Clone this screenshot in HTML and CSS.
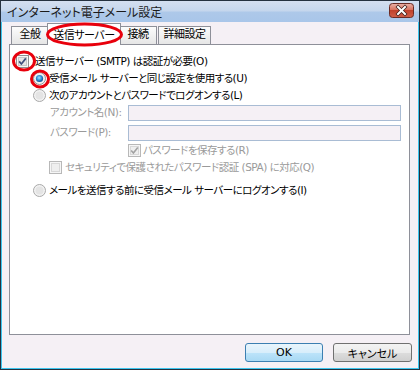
FILE: index.html
```html
<!DOCTYPE html>
<html lang="ja">
<head>
<meta charset="utf-8">
<title>インターネット電子メール設定</title>
<link rel="stylesheet" href="styles.css">
</head>
<body>
<div class="window">
  <div class="titlebar">
    <span class="title">インターネット電子メール設定</span>
    <span class="close">
      <svg width="25" height="15" viewBox="0 0 25 15">
        <defs>
          <linearGradient id="cg" x1="0" y1="0" x2="0" y2="1">
            <stop offset="0" stop-color="#eab2a8"/>
            <stop offset="0.45" stop-color="#d9735f"/>
            <stop offset="0.5" stop-color="#c1412c"/>
            <stop offset="1" stop-color="#d0604a"/>
          </linearGradient>
        </defs>
        <rect x="0.5" y="0.5" width="24" height="14" rx="3" fill="url(#cg)" stroke="#6b2b24"/>
        <path d="M9 4 L16 11 M16 4 L9 11" stroke="#3a1a16" stroke-width="3.4" stroke-linecap="square"/>
        <path d="M9 4 L16 11 M16 4 L9 11" stroke="#ffffff" stroke-width="2" stroke-linecap="square"/>
      </svg>
    </span>
  </div>
  <div class="body">
    <div class="tabs">
      <span class="tab t1">全般</span>
      <span class="tab active t2">送信サーバー</span>
      <span class="tab t3">接続</span>
      <span class="tab t4">詳細設定</span>
    </div>
    <div class="panel">
      <div class="row r1">
        <svg class="box" width="13" height="13" viewBox="0 0 13 13">
          <rect x="0.5" y="0.5" width="12" height="12" fill="#f6f6f6" stroke="#8e8f8f"/>
          <rect x="2.5" y="2.5" width="8" height="8" fill="#e6e6e6" stroke="#c6c6c6"/>
          <path d="M3.2 6.4 L5.4 9 L9.8 3.4" fill="none" stroke="#3f4f7c" stroke-width="1.7"/>
        </svg>
        <span class="lbl l1">送信サーバー (SMTP) は認証が必要(O)</span>
      </div>
      <div class="row r2">
        <svg class="box" width="13" height="13" viewBox="0 0 13 13">
          <defs>
            <radialGradient id="rg" cx="0.45" cy="0.4" r="0.6">
              <stop offset="0" stop-color="#9fe2ff"/>
              <stop offset="0.6" stop-color="#2a8ad4"/>
              <stop offset="1" stop-color="#10488a"/>
            </radialGradient>
          </defs>
          <circle cx="6.5" cy="6.5" r="6" fill="#f0f0f0" stroke="#8e8f8f"/>
          <circle cx="6.5" cy="6.5" r="3.6" fill="url(#rg)"/>
        </svg>
        <span class="lbl">受信メール サーバーと同じ設定を使用する(U)</span>
      </div>
      <div class="row r3">
        <svg class="box" width="13" height="13" viewBox="0 0 13 13">
          <circle cx="6.5" cy="6.5" r="6" fill="#f2f2f2" stroke="#a8a8a8"/>
          <circle cx="6.5" cy="6.5" r="4" fill="#e4e4e4"/>
        </svg>
        <span class="lbl">次のアカウントとパスワードでログオンする(L)</span>
      </div>
      <div class="row r4">
        <span class="lbl dis field">アカウント名(N):</span>
        <span class="input"></span>
      </div>
      <div class="row r5">
        <span class="lbl dis field">パスワード(P):</span>
        <span class="input"></span>
      </div>
      <div class="row r6">
        <svg class="box" width="13" height="13" viewBox="0 0 13 13">
          <rect x="0.5" y="0.5" width="12" height="12" fill="#f6f6f6" stroke="#b8b8b8"/>
          <rect x="2.5" y="2.5" width="8" height="8" fill="#efefef" stroke="#d8d8d8"/>
          <path d="M3.2 6.4 L5.4 9 L9.8 3.4" fill="none" stroke="#a2a2a2" stroke-width="1.6"/>
        </svg>
        <span class="lbl dis">パスワードを保存する(R)</span>
      </div>
      <div class="row r7">
        <svg class="box" width="13" height="13" viewBox="0 0 13 13">
          <rect x="0.5" y="0.5" width="12" height="12" fill="#f6f6f6" stroke="#b8b8b8"/>
          <rect x="2.5" y="2.5" width="8" height="8" fill="#efefef" stroke="#d8d8d8"/>
        </svg>
        <span class="lbl dis">セキュリティで保護されたパスワード認証 (SPA) に対応(Q)</span>
      </div>
      <div class="row r8">
        <svg class="box" width="13" height="13" viewBox="0 0 13 13">
          <circle cx="6.5" cy="6.5" r="6" fill="#f2f2f2" stroke="#a8a8a8"/>
          <circle cx="6.5" cy="6.5" r="4" fill="#e4e4e4"/>
        </svg>
        <span class="lbl">メールを送信する前に受信メール サーバーにログオンする(I)</span>
      </div>
    </div>
    <div class="buttons">
      <span class="btn ok">OK</span>
      <span class="btn cancel">キャンセル</span>
    </div>
  </div>
  <svg class="marks" width="420" height="370" viewBox="0 0 420 370">
    <ellipse cx="84.5" cy="34.5" rx="37" ry="10.5" fill="none" stroke="#e8000c" stroke-width="3"/>
    <ellipse cx="24" cy="61" rx="10.5" ry="9" fill="none" stroke="#e8000c" stroke-width="3"/>
    <ellipse cx="40" cy="79" rx="8.5" ry="8" fill="none" stroke="#e8000c" stroke-width="3"/>
  </svg>
</div>
</body>
</html>
```
FILE: styles.css
```css
* { box-sizing: border-box; }
html, body { margin: 0; padding: 0; }
body {
  width: 420px;
  height: 370px;
  overflow: hidden;
  font-family: "DejaVu Sans", "Noto Sans CJK JP", sans-serif;
  font-size: 10.5px;
  letter-spacing: -0.5px;
  font-feature-settings: "palt";
  color: #000;
}
.window {
  position: relative;
  width: 420px;
  height: 370px;
  border: 1px solid #25313f;
  display: flex;
  flex-direction: column;
  background: #f5f0f5;
}
.titlebar {
  height: 21px;
  flex: none;
  display: flex;
  align-items: center;
  justify-content: space-between;
  padding: 0 5px 0 6px;
  background: linear-gradient(#d4dff0 0%, #c6d7ed 45%, #adc8e9 55%, #a9c6e9 100%);
}
.title {
  font-family: "Noto Sans CJK JP", sans-serif;
  font-size: 12px;
  letter-spacing: 0;
  color: #1b1b1b;
  line-height: 21px;
}
.close { display: flex; margin-top: -2px; }
.body {
  flex: 1;
  display: flex;
  flex-direction: column;
  border: 1px solid #3cc6ef;
  border-top: none;
  padding: 1px 8px 0 7px;
  background: #f5f0f5;
}
.tabs {
  height: 21px;
  display: flex;
  align-items: flex-end;
  padding-left: 2px;
  position: relative;
  z-index: 2;
}
.tab {
  height: 18px;
  border: 1px solid #8e9099;
  border-bottom: none;
  background: linear-gradient(#fcfcfc, #e6e6e6);
  display: flex;
  align-items: center;
  justify-content: center;
  font-size: 11px;
  line-height: 16px;
  padding-bottom: 1px;
}
.t1 { width: 38px; }
.t2 { width: 74px; margin: 0 -2px 0 -2px; }
.t3 { width: 38px; }
.t4 { width: 53px; margin-left: 1px; }
.tab.active {
  height: 22px;
  margin-bottom: -1px;
  background: #ffffff;
  position: relative;
  z-index: 3;
  padding-bottom: 0;
  padding-top: 2px;
}
.panel {
  height: 291px;
  border: 1px solid #8e9099;
  background: #ffffff;
  display: flex;
  flex-direction: column;
  padding-top: 8px;
}
.row {
  height: 17px;
  display: flex;
  align-items: center;
  flex: none;
}
.box { flex: none; }
.lbl { white-space: nowrap; line-height: 17px; }
.dis { color: #9a9a9a; }
.r1 { padding-left: 6px; }
.r1 .lbl { margin-left: 6px; }
.r2, .r3, .r8 { padding-left: 23px; }
.r2 .lbl, .r3 .lbl, .r8 .lbl { margin-left: 3px; }
.r4 { padding-left: 40px; }
.r5 { padding-left: 40px; margin-top: 3px; }
.field { width: 78px; }
.input {
  width: 273px;
  height: 16px;
  border: 1px solid #a9bcd4;
  background: #f5f0f5;
}
.r6 { padding-left: 118px; margin-top: 1px; }
.r6 .lbl { margin-left: 2px; }
.r7 { padding-left: 39px; }
.r7 .lbl { margin-left: 3px; }
.r8 { margin-top: 6px; }
.buttons {
  display: flex;
  justify-content: flex-end;
  gap: 10px;
  margin-top: 8px;
  margin-right: -2px;
}
.btn {
  height: 19px;
  border-radius: 3px;
  display: flex;
  align-items: center;
  justify-content: center;
  font-size: 11px;
  letter-spacing: 0;
}
.ok {
  width: 78px;
  border: 1px solid #3c7fb1;
  background: linear-gradient(#e9f5fc 0%, #d8eefb 50%, #bde4fa 50%, #a9d9f4 100%);
}
.cancel {
  width: 79px;
  border: 1px solid #707070;
  background: linear-gradient(#f3f3f3 0%, #ebebeb 50%, #dddddd 50%, #d0d0d0 100%);
}
.marks {
  position: absolute;
  left: -1px;
  top: -1px;
  pointer-events: none;
  z-index: 10;
}
```
